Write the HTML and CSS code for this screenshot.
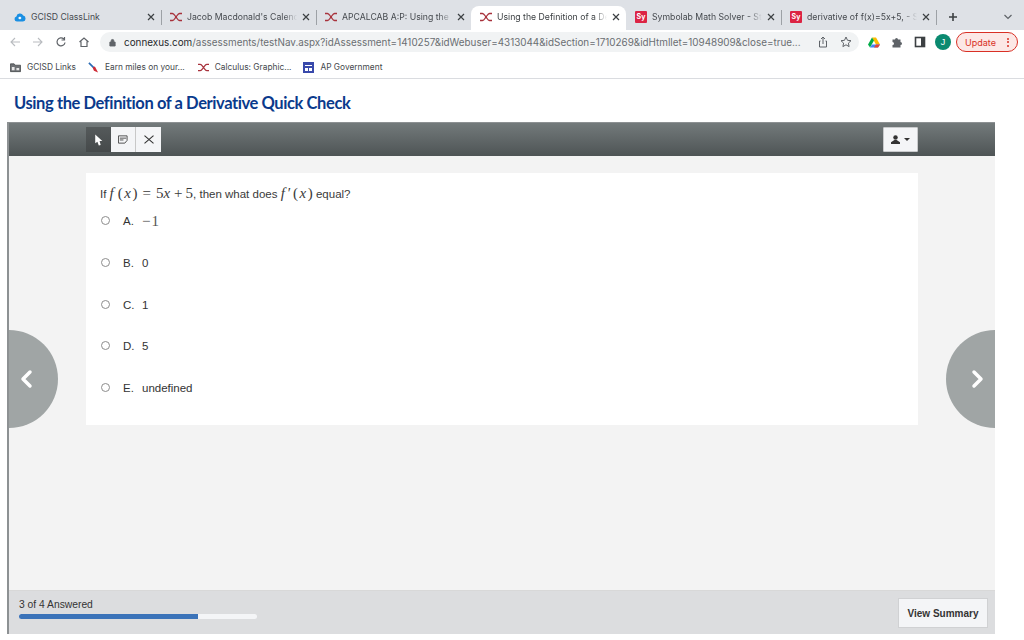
FILE: index.html
```html
<!DOCTYPE html>
<html lang="en">
<head>
<meta charset="utf-8">
<title>Using the Definition of a Derivative Quick Check</title>
<link rel="stylesheet" href="styles.css">
</head>
<body>
<svg class="defs" width="0" height="0" aria-hidden="true">
  <symbol id="cx" viewBox="0 0 12 9"><path d="M0 1H2.500C4 1 4.800 3 6 4.500C7.200 3 8 1 9.500 1H12M0 8H2.500C4 8 4.800 6 6 4.500C7.200 6 8 8 9.500 8H12" fill="none" stroke="#a8323c" stroke-width="1.300"/></symbol>
  <symbol id="x" viewBox="0 0 8 8"><path d="M1 1L7 7M7 1L1 7" stroke="#3c4043" stroke-width="1.200" fill="none"/></symbol>
</svg>
<header class="tabstrip">
  <div class="tab"><svg class="fav" viewBox="0 0 12 10"><path d="M3 9.500a2.600 2.600 0 0 1-.6-5.100A3.600 3.600 0 0 1 9.200 3.600a3 3 0 0 1-.2 5.900z" fill="#1a8fe3"/><path d="M4 6l2-1.500L7.500 6 6 7.500z" fill="#fff"/></svg><span class="tab-title">GCISD ClassLink</span><svg class="close"><use href="#x"/></svg></div>
  <div class="tab"><svg class="fav"><use href="#cx"/></svg><span class="tab-title fade">Jacob Macdonald's Calend</span><svg class="close"><use href="#x"/></svg></div>
  <div class="tab"><svg class="fav"><use href="#cx"/></svg><span class="tab-title fade">APCALCAB A:P: Using the</span><svg class="close"><use href="#x"/></svg></div>
  <div class="tab active"><svg class="fav"><use href="#cx"/></svg><span class="tab-title fade">Using the Definition of a De</span><svg class="close"><use href="#x"/></svg></div>
  <div class="tab"><span class="sy">Sy</span><span class="tab-title fade">Symbolab Math Solver - St</span><svg class="close"><use href="#x"/></svg></div>
  <div class="tab"><span class="sy">Sy</span><span class="tab-title fade">derivative of f(x)=5x+5, - S</span><svg class="close"><use href="#x"/></svg></div>
  <svg class="newtab" viewBox="0 0 10 10"><path d="M5 1V9M1 5H9" stroke="#3c4043" stroke-width="1.600" fill="none"/></svg>
  <svg class="chev" viewBox="0 0 10 6"><path d="M1.500 1L5 4.500 8.500 1" stroke="#5f6368" stroke-width="1.200" fill="none"/></svg>
</header>
<nav class="toolbar">
  <svg class="tb" viewBox="0 0 12 12"><path d="M11 6H2M6 2L2 6l4 4" stroke="#b9bcc0" stroke-width="1.100" fill="none"/></svg>
  <svg class="tb" viewBox="0 0 12 12"><path d="M1 6h9M6 2l4 4-4 4" stroke="#b9bcc0" stroke-width="1.100" fill="none"/></svg>
  <svg class="tb" viewBox="0 0 12 12"><path d="M10 6.500A4 4 0 1 1 8.800 3M9.500 1v3H6.500" stroke="#5f6368" stroke-width="1.200" fill="none"/></svg>
  <svg class="tb" viewBox="0 0 12 12"><path d="M1.500 6L6 2l4.500 4M3 5.500V10.500H9V5.500" stroke="#5f6368" stroke-width="1.200" fill="none"/></svg>
  <div class="omnibox">
    <svg class="lock" viewBox="0 0 8 10"><path d="M1 4.500h6v4.500H1zM2.500 4.500V3a1.500 1.500 0 0 1 3 0v1.500" fill="#5f6368" stroke="#5f6368"/></svg>
    <span class="url"><b>connexus.com</b>/assessments/testNav.aspx?idAssessment=1410257&amp;idWebuser=4313044&amp;idSection=1710269&amp;idHtmllet=10948909&amp;close=true...</span>
    <svg class="omni-ic" viewBox="0 0 12 12"><path d="M6 8V1M4 3l2-2 2 2M3.500 5H2.500v6h7V5h-1" stroke="#5f6368" fill="none"/></svg>
    <svg class="omni-ic" viewBox="0 0 12 12"><path d="M6 1l1.500 3.300 3.500.4-2.600 2.400.7 3.500L6 8.800 2.900 10.600l.7-3.500L1 4.700l3.500-.4z" stroke="#5f6368" fill="none"/></svg>
  </div>
  <div class="ext">
    <svg class="ext-ic" viewBox="0 0 12 11"><path d="M4 1h4l4 7H8z" fill="#fbbc04"/><path d="M4 1L0 8l2 3 4-7z" fill="#00ac47"/><path d="M2 11h8l2-3H4z" fill="#4285f4"/><path d="M8 8h4l-2 3H6z" fill="#ea4335"/></svg>
    <svg class="ext-ic" viewBox="0 0 12 12"><path d="M1.500 3.500h2.500a1.500 1.500 0 0 1 3 0h2.500V6a1.500 1.500 0 0 1 0 3v2.500H1.500V9a1.500 1.500 0 0 0 0-3z" fill="#5f6368"/></svg>
    <svg class="ext-ic" viewBox="0 0 12 12"><rect x="1.500" y="1.500" width="9" height="9" fill="none" stroke="#3c4043" stroke-width="1.600"/><rect x="7" y="1.500" width="3.500" height="9" fill="#3c4043"/></svg>
    <span class="avatar">J</span>
  </div>
  <div class="update">Update<span class="dots"><i></i><i></i><i></i></span></div>
</nav>
<nav class="bookmarks">
  <div class="bm"><svg class="bm-ic" viewBox="0 0 12 10"><path d="M.5 1h4l1 1.500h6V9.500H.5z" fill="#6f7276" stroke="#3c4043" stroke-width=".8"/><path d="M2 4.500h3V8H2zM7 5.500h3V8H7z" fill="#e6e6e6"/></svg><span>GCISD Links</span></div>
  <div class="bm gap1"><svg class="bm-ic" viewBox="0 0 12 12"><path d="M1 1L7 7" stroke="#2b6cb5" stroke-width="1.800"/><path d="M5 6L7.500 4.800 11 11.500 6.500 9.500z" fill="#cf2b36"/></svg><span>Earn miles on your...</span></div>
  <div class="bm gap2"><svg class="bm-ic"><use href="#cx"/></svg><span>Calculus: Graphic...</span></div>
  <div class="bm gap3"><svg class="bm-ic" viewBox="0 0 11 11"><rect width="11" height="11" fill="#3949ab"/><path d="M2 3h7v1H2zM2 6h3v3H2zM6 6h3v3H6z" fill="#fff"/></svg><span>AP Government</span></div>
</nav>
<main class="page">
  <h1 class="title">Using the Definition of a Derivative Quick Check</h1>
  <section class="test">
    <div class="test-head">
      <div class="tools">
        <button class="tool on"><svg class="cursor" viewBox="0 0 8 11"><path d="M1 0.500L7.500 6.500H5L6 10 4.300 10.500 3 7 1 8.500z" fill="#fff"/></svg></button>
        <button class="tool"><svg viewBox="0 0 11 9"><path d="M.5.500h9.500v5L7.500 8.500H.5zM2 3h7M2 5h4" fill="none" stroke="#444"/></svg></button>
        <button class="tool"><svg class="cross" viewBox="0 0 10 8"><path d="M1 .5L9 7.500M9 .5L1 7.500" stroke="#333" fill="none"/></svg></button>
      </div>
      <button class="user"><svg viewBox="0 0 8 8" class="user-ic"><circle cx="4" cy="2.200" r="2" fill="#333"/><path d="M0 8V6.500L3 4.500h2L8 6.500V8z" fill="#333"/></svg><span class="caret"></span></button>
    </div>
    <div class="test-body">
      <article class="card">
        <p class="q">If <span class="m"><i class="fn">f</i>(<i class="x">x</i>)<span class="rel">=</span>5<i>x</i><span class="bin">+</span>5</span>, then what does <span class="m"><i class="fp">f</i>′<span class="paren">(<i class="x">x</i>)</span></span> equal?</p>
        <ol class="opts">
          <li class="opt"><span class="radio"></span><span class="let">A.</span><span class="m neg">−1</span></li>
          <li class="opt"><span class="radio"></span><span class="let">B.</span><span>0</span></li>
          <li class="opt"><span class="radio"></span><span class="let">C.</span><span>1</span></li>
          <li class="opt"><span class="radio"></span><span class="let">D.</span><span>5</span></li>
          <li class="opt"><span class="radio"></span><span class="let">E.</span><span>undefined</span></li>
        </ol>
      </article>
      <div class="arrow left"><svg viewBox="0 0 14 20"><path d="M11 3L4 10l7 7" fill="none" stroke="#fff" stroke-width="3.500" stroke-linecap="round" stroke-linejoin="round"/></svg></div>
      <div class="arrow right"><svg viewBox="0 0 14 20"><path d="M3 3l7 7-7 7" fill="none" stroke="#fff" stroke-width="3.500" stroke-linecap="round" stroke-linejoin="round"/></svg></div>
    </div>
    <footer class="test-foot">
      <div class="progress"><div class="answered">3 of 4 Answered</div><div class="bar"><div class="fill"></div></div></div>
      <button class="summary">View Summary</button>
    </footer>
  </section>
</main>
</body>
</html>
```
FILE: styles.css
```css
* { box-sizing: border-box; }
html, body { margin: 0; height: 640px; overflow: hidden; background: #fff; }
body { font-family: "Liberation Sans", Arial, sans-serif; color: #333; display: flex; flex-direction: column; }
.defs { position: absolute; }
button { font-family: inherit; }

.tabstrip { height: 30px; background: #dee1e6; display: flex; align-items: flex-end; padding-left: 6px; flex: none; }
.tab { width: 155px; height: 24px; padding: 0 4px 2px 8px; display: flex; align-items: center; gap: 5px; font-size: 8.700px; color: #45494e; position: relative; font-family: "Inter", "Liberation Sans", sans-serif; }
.tab + .tab { padding-left: 9px; }
.tab::after { content: ""; position: absolute; right: -1px; top: 4px; height: 15px; width: 1px; background: #9da1a6; }
.tab:nth-child(3)::after, .tab.active::after { display: none; }
.tab.active { background: #fff; border-radius: 8px 8px 0 0; color: #3c4043; }
.fav { width: 12px; height: 10px; flex: none; }
.tab-title { flex: 1; min-width: 0; white-space: nowrap; }
.tab-title.fade { -webkit-mask-image: linear-gradient(to right, #000 88%, transparent); mask-image: linear-gradient(to right, #000 88%, transparent); }
.close { width: 8px; height: 8px; flex: none; margin-right: 2px; }
.sy { width: 12px; height: 12px; flex: none; background: #dc2444; color: #fff; font-size: 7px; font-weight: 700; line-height: 12px; text-align: center; border-radius: 1px; }
.newtab { width: 10px; height: 10px; margin: 0 0 8px 12px; flex: none; }
.chev { width: 10px; height: 6px; margin: 0 0 10px 45px; flex: none; }

.toolbar { height: 24px; flex: none; display: flex; align-items: center; padding: 0 6px 0 9px; background: #fff; }
.tb { width: 12px; height: 12px; flex: none; margin-right: 11px; }
.omnibox { width: 759px; height: 20px; margin-left: -1px; background: #f1f3f4; border-radius: 10px; display: flex; align-items: center; padding: 0 7px 0 9px; }
.lock { width: 7px; height: 9px; flex: none; margin-right: 8px; }
.url { flex: 1; font-size: 9.880px; color: #6a6e72; white-space: nowrap; overflow: hidden; font-family: "Inter", "Liberation Sans", sans-serif; }
.url b { font-weight: 400; color: #26292c; }
.omni-ic { width: 12px; height: 12px; flex: none; margin-left: 11px; }
.ext { display: flex; align-items: center; gap: 11px; margin-left: 9px; }
.ext-ic { width: 12px; height: 12px; flex: none; }
.avatar { width: 16px; height: 16px; margin-left: -2px; border-radius: 50%; background: #0b8a70; color: #fff; font-size: 9px; line-height: 16px; text-align: center; }
.update { width: 62px; height: 20px; margin-left: 5px; border: 1px solid #d93025; border-radius: 10px; background: #fce8e6; color: #d93025; font-size: 9px; display: flex; align-items: center; justify-content: space-between; padding: 0 8px 0 8px; font-family: "Inter", "Liberation Sans", sans-serif; }
.dots { display: flex; flex-direction: column; gap: 1.500px; }
.dots i { width: 2px; height: 2px; border-radius: 50%; background: #d93025; display: block; }

.bookmarks { height: 25px; flex: none; display: flex; align-items: center; padding: 2px 0 0 10px; border-bottom: 1px solid #dadce0; font-size: 8.350px; color: #44484c; font-family: "Inter", "Liberation Sans", sans-serif; }
.bm { display: flex; align-items: center; gap: 6px; white-space: nowrap; }
.bm-ic { width: 11px; height: 11px; flex: none; }
.gap1 { margin-left: 12px; }
.gap2 { margin-left: 13px; }
.gap3 { margin-left: 12px; }

.page { flex: 1; display: flex; flex-direction: column; min-height: 0; }
.title { margin: 14px 0 9px 14px; font: 700 16.500px/20px "Lato", sans-serif; color: #0a3a8c; letter-spacing: -.41px; }
.test { flex: none; height: 512px; margin: 0 29px 0 7px; border-left: 2px solid #8d9193; border-top: 1px solid #8d9193; display: flex; flex-direction: column; position: relative; }
.test-head { height: 33px; flex: none; background: linear-gradient(#737a7b, #4e5455); display: flex; align-items: center; justify-content: space-between; padding: 0 77px; }
.tools { display: flex; }
.tool { width: 25px; height: 25px; padding: 0; border: 0; border-right: 1px solid #c8c8c8; background: #f4f5f7; display: flex; align-items: center; justify-content: center; }
.tool:last-child { border-right: 0; }
.tool svg { width: 10px; height: 9px; }
.tool svg.cursor { width: 9px; height: 12px; }
.tool svg.cross { width: 12px; height: 9px; }
.tool.on { background: linear-gradient(#555a5b, #45494a); border-right: 0; }
.user { width: 35px; height: 25px; padding: 0; border: 1px solid #c9cacc; border-radius: 1px; background: #f4f5f7; display: flex; align-items: center; justify-content: center; gap: 4px; }
.user-ic { width: 9px; height: 9px; }
.caret { width: 0; height: 0; border: 3px solid transparent; border-top-color: #333; border-bottom: 0; }
.test-body { flex: 1; background: #f3f3f3; padding: 17px 77px 0; min-height: 0; position: relative; }
.card { height: 252px; background: #fff; padding: 11px 14px 0; font-size: 11.500px; color: #3a3a3a; }
.q { margin: 0; height: 20px; line-height: 18px; }
.m { font-family: "Liberation Serif", serif; font-size: 15px; }
.fn { margin-right: 4px; }
.fp { margin-right: 3px; }
.paren { margin-left: 2px; }
.x { margin: 0 1.500px; }
.rel { margin: 0 5px; }
.bin { margin: 0 3px 0 4px; }
.opts { list-style: none; margin: 9px 0 0; padding: 0; }
.opt { height: 41.750px; display: flex; align-items: flex-start; line-height: 16px; color: #333; }
.radio { width: 9px; height: 9px; border: 1px solid #8d8d8d; border-radius: 50%; background: #fff; margin: 3px 0 0 1px; flex: none; }
.let { margin-left: 13px; width: 19px; flex: none; }
.neg { letter-spacing: 1px; color: #555; }
.arrow { position: absolute; top: 174px; width: 49px; height: 98px; background: #a0a5a5; display: flex; align-items: center; justify-content: center; }
.arrow svg { width: 14px; height: 20px; }
.arrow.left { left: 0; border-radius: 0 49px 49px 0; padding-right: 15px; }
.arrow.right { right: 0; border-radius: 49px 0 0 49px; padding-left: 14px; }
.test-foot { height: 44px; flex: none; background: #dcdddf; display: flex; align-items: center; justify-content: space-between; padding: 0 7px 0 10px; border-top: 1px solid #d8d8d8; }
.answered { font-size: 10.300px; line-height: 14px; color: #333; margin-bottom: 2px; }
.progress { margin-top: -8px; }
.bar { width: 238px; height: 5px; background: #f4f5f7; border-radius: 3px; overflow: hidden; }
.fill { width: 75%; height: 100%; background: #3b73b9; }
.summary { width: 90px; height: 30px; padding: 1px 0 0; border: 1px solid #d0d1d3; background: #f4f5f7; font-size: 10px; font-weight: 700; color: #333; }
```
